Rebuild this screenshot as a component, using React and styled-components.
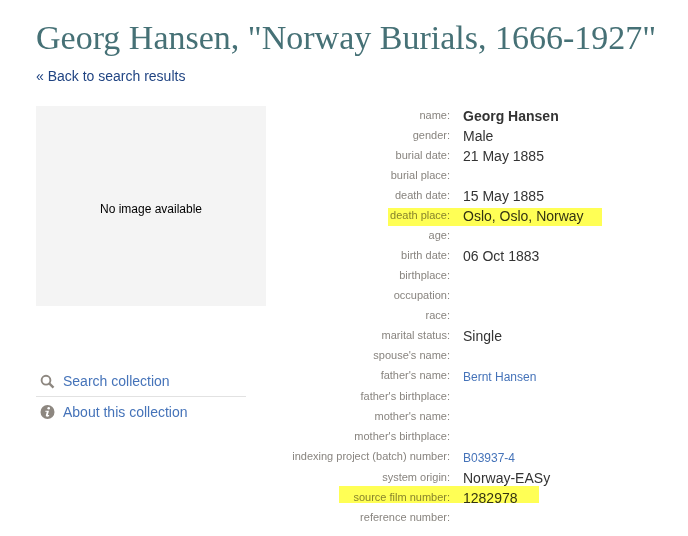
import React from "react";
import styled, { createGlobalStyle } from "styled-components";

const GlobalStyle = createGlobalStyle`
  * { box-sizing: border-box; }
  body {
    margin: 0;
    background: #fff;
    color: #333;
    font-family: "Liberation Sans", Arial, sans-serif;
    font-size: 14px;
  }
`;

const Page = styled.main`
  padding: 16px 20px 8px 36px;
`;

const Title = styled.h1`
  margin: 0;
  color: #467176;
  font-family: "Palatino Linotype", Palatino, "Liberation Serif", serif;
  font-size: 34px;
  font-weight: 400;
  line-height: 44px;
`;

const BackLink = styled.a`
  display: block;
  margin-top: 6px;
  color: #1f4382;
  line-height: 20px;
  text-decoration: none;
`;

const Columns = styled.div`
  display: grid;
  grid-template-columns: 230px minmax(0, 1fr);
  margin-top: 20px;
`;

const ImagePlaceholder = styled.div`
  display: flex;
  align-items: center;
  justify-content: center;
  height: 200px;
  padding-top: 6px;
  background: #f4f4f4;
  color: #000;
  font-size: 12px;
`;

const CollectionLinks = styled.nav`
  width: 210px;
  margin-top: 60px;
`;

const CollectionLink = styled.a`
  display: flex;
  align-items: center;
  gap: 8px;
  height: 30px;
  padding-left: 4px;
  color: #4573b9;
  text-decoration: none;

  & + & {
    height: 31px;
    border-top: 1px solid #e2e2e2;
  }
`;

const Icon = styled.svg`
  flex: none;
  width: 15px;
  height: 15px;
`;

const Record = styled.table`
  width: 100%;
  border-collapse: collapse;
  table-layout: fixed;
`;

const Label = styled.th`
  position: relative;
  width: 184px;
  height: ${(p) => (p.$tall ? 21 : 20)}px;
  padding: 0;
  color: #88847f;
  font-size: 11px;
  font-weight: 400;
  line-height: 18px;
  text-align: right;
  vertical-align: top;
  white-space: nowrap;
`;

const Value = styled.td`
  padding: 0 0 0 13px;
  font-size: ${(p) => (p.$small ? 12 : 14)}px;
  font-weight: ${(p) => (p.$strong ? 700 : 400)};
  line-height: 20px;
`;

const ValueLink = styled.a`
  color: #4573b9;
  text-decoration: none;
`;

const Marker = styled.span`
  position: absolute;
  top: ${(p) => p.$top}px;
  right: ${(p) => p.$right}px;
  width: ${(p) => p.$width}px;
  height: ${(p) => p.$height}px;
  background: #ffff55;
  mix-blend-mode: multiply;
  pointer-events: none;
`;

const fields = [
  { label: "name:", value: "Georg Hansen", strong: true },
  { label: "gender:", value: "Male" },
  { label: "burial date:", value: "21 May 1885" },
  { label: "burial place:" },
  { label: "death date:", value: "15 May 1885" },
  { label: "death place:", value: "Oslo, Oslo, Norway", marker: { top: 2, right: -152, width: 214, height: 18 } },
  { label: "age:" },
  { label: "birth date:", value: "06 Oct 1883" },
  { label: "birthplace:" },
  { label: "occupation:" },
  { label: "race:" },
  { label: "marital status:", value: "Single" },
  { label: "spouse's name:" },
  { label: "father's name:", value: "Bernt Hansen", link: true },
  { label: "father's birthplace:" },
  { label: "mother's name:" },
  { label: "mother's birthplace:" },
  { label: "indexing project (batch) number:", value: "B03937-4", link: true },
  { label: "system origin:", value: "Norway-EASy" },
  { label: "source film number:", value: "1282978", marker: { top: -2, right: -89, width: 200, height: 17 } },
  { label: "reference number:" },
];

function SearchIcon() {
  return (
    <Icon viewBox="0 0 15 15" aria-hidden="true">
      <circle cx="6" cy="6.2" r="4.4" fill="none" stroke="#8d8780" strokeWidth="1.9" />
      <path d="M9.2 9.400l4.300 4.300" stroke="#8d8780" strokeWidth="2.4" />
    </Icon>
  );
}

function InfoIcon() {
  return (
    <Icon viewBox="0 0 15 15" aria-hidden="true">
      <circle cx="7.5" cy="7" r="7" fill="#8d8780" />
      <circle cx="8.7" cy="3.3" r="1.3" fill="#fff" />
      <path d="M5.5 5.7h3.5l-1.2 4.4h1.5l-.4 1.2c-1.6.7-3.5.4-3-1.2l.9-3.3H5.2z" fill="#fff" />
    </Icon>
  );
}

export default function App() {
  return (
    <>
      <GlobalStyle />
      <Page>
        <Title>Georg Hansen, "Norway Burials, 1666-1927"</Title>
        <BackLink href="#results">« Back to search results</BackLink>
        <Columns>
          <aside>
            <ImagePlaceholder>No image available</ImagePlaceholder>
            <CollectionLinks aria-label="Collection">
              <CollectionLink href="#search"><SearchIcon />Search collection</CollectionLink>
              <CollectionLink href="#about"><InfoIcon />About this collection</CollectionLink>
            </CollectionLinks>
          </aside>
          <Record>
            <tbody>
              {fields.map(({ label, value, strong, link, marker }) => (
                <tr key={label}>
                  <Label scope="row" $tall={link}>
                    {label}
                    {marker && (
                      <Marker
                        $top={marker.top}
                        $right={marker.right}
                        $width={marker.width}
                        $height={marker.height}
                      />
                    )}
                  </Label>
                  <Value $strong={strong} $small={link}>
                    {link ? <ValueLink href="#record">{value}</ValueLink> : value}
                  </Value>
                </tr>
              ))}
            </tbody>
          </Record>
        </Columns>
      </Page>
    </>
  );
}
